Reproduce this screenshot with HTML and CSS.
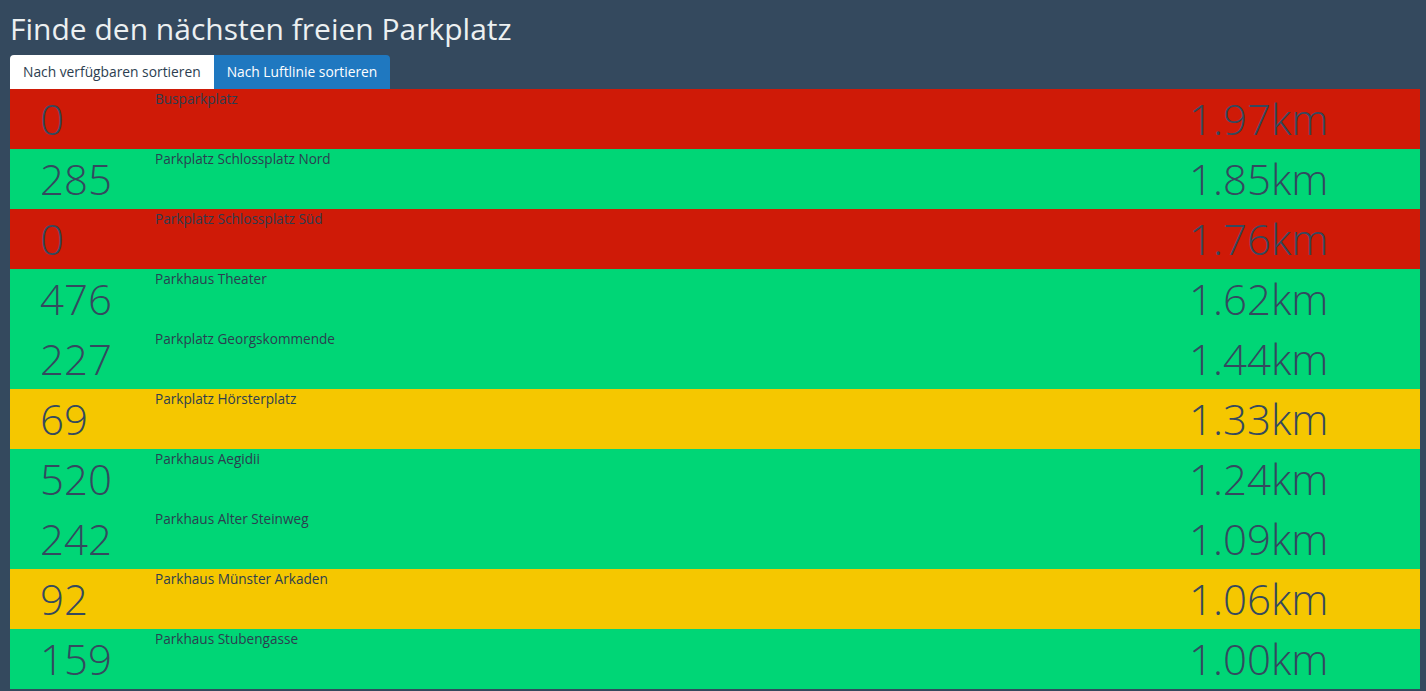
FILE: index.html
```html
<!DOCTYPE html>
<html lang="de">
<head>
<meta charset="utf-8">
<title>Parkplatz</title>
<link rel="stylesheet" href="styles.css">
</head>
<body>
<div class="page">
  <h1 class="title">Finde den nächsten freien Parkplatz</h1>
  <div class="tabs">
    <button class="tab">Nach verfügbaren sortieren</button>
    <button class="tab active">Nach Luftlinie sortieren</button>
  </div>
  <div class="list">
    <div class="row red"><div class="count">0</div><div class="name">Busparkplatz</div><div class="dist">1.97km</div></div>
    <div class="row green"><div class="count">285</div><div class="name">Parkplatz Schlossplatz Nord</div><div class="dist">1.85km</div></div>
    <div class="row red"><div class="count">0</div><div class="name">Parkplatz Schlossplatz Süd</div><div class="dist">1.76km</div></div>
    <div class="row green"><div class="count">476</div><div class="name">Parkhaus Theater</div><div class="dist">1.62km</div></div>
    <div class="row green"><div class="count">227</div><div class="name">Parkplatz Georgskommende</div><div class="dist">1.44km</div></div>
    <div class="row yellow"><div class="count">69</div><div class="name">Parkplatz Hörsterplatz</div><div class="dist">1.33km</div></div>
    <div class="row green"><div class="count">520</div><div class="name">Parkhaus Aegidii</div><div class="dist">1.24km</div></div>
    <div class="row green"><div class="count">242</div><div class="name">Parkhaus Alter Steinweg</div><div class="dist">1.09km</div></div>
    <div class="row yellow"><div class="count">92</div><div class="name">Parkhaus Münster Arkaden</div><div class="dist">1.06km</div></div>
    <div class="row green"><div class="count">159</div><div class="name">Parkhaus Stubengasse</div><div class="dist">1.00km</div></div>
  </div>
</div>
</body>
</html>
```
FILE: styles.css
```css
html, body {
  margin: 0;
  padding: 0;
  background: #34495e;
  font-family: "Open Sans", "Liberation Sans", sans-serif;
  color: #34495e;
  overflow: hidden;
}
.page {
  padding: 0 6px 0 10px;
}
.title {
  margin: 0;
  padding-top: 11px;
  height: 55px;
  box-sizing: border-box;
  font-size: 30px;
  font-weight: 400;
  line-height: 36px;
  color: #ecf0f1;
}
.tabs {
  display: flex;
  height: 34px;
}
.tab {
  border: none;
  margin: 0;
  padding: 0 13px;
  font-family: inherit;
  font-size: 13.8px;
  line-height: 34px;
  height: 34px;
  background: #ffffff;
  color: #2c3e50;
  border-radius: 4px 0 0 0;
  cursor: pointer;
}
.tab.active {
  background: #1f78c0;
  color: #ffffff;
  border-radius: 0 4px 0 0;
}
.list {
  display: flex;
  flex-direction: column;
}
.row {
  display: grid;
  grid-template-columns: 145px 1fr 231px;
  height: 60px;
}
.red { background: #cf1a07; }
.green { background: #00d676; }
.yellow { background: #f5c700; }
.count, .dist {
  font-size: 42px;
  font-weight: 300;
  line-height: 60px;
  color: #34495e;
}
.count {
  padding-left: 30px;
}
.name {
  font-size: 13.6px;
  line-height: 20px;
  color: #2c3e50;
}
```
